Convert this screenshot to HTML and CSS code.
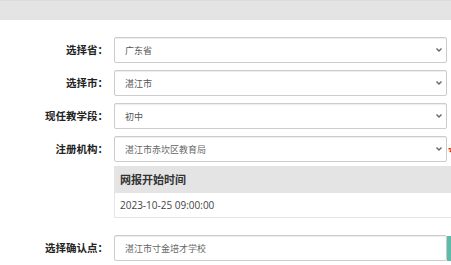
FILE: index.html
```html
<!DOCTYPE html>
<html lang="zh-CN">
<head>
    <meta charset="UTF-8">
    <meta name="viewport" content="width=device-width, initial-scale=1.0">
    <title>报名信息</title>
    <link rel="stylesheet" href="styles.css">
</head>
<body>
    <div class="topbar"></div>

    <div class="form">
        <div class="form-row">
            <label class="form-label">选择省：</label>
            <div class="select">
                <span class="select-text">广东省</span>
                <svg class="chevron" width="6" height="4" viewBox="0 0 6 4"><path d="M0.5 0.5 L3 3 L5.5 0.5" fill="none" stroke="#666" stroke-width="1.4"/></svg>
            </div>
        </div>
        <div class="form-row">
            <label class="form-label">选择市：</label>
            <div class="select">
                <span class="select-text">湛江市</span>
                <svg class="chevron" width="6" height="4" viewBox="0 0 6 4"><path d="M0.5 0.5 L3 3 L5.5 0.5" fill="none" stroke="#666" stroke-width="1.4"/></svg>
            </div>
        </div>
        <div class="form-row">
            <label class="form-label">现任教学段：</label>
            <div class="select">
                <span class="select-text">初中</span>
                <svg class="chevron" width="6" height="4" viewBox="0 0 6 4"><path d="M0.5 0.5 L3 3 L5.5 0.5" fill="none" stroke="#666" stroke-width="1.4"/></svg>
            </div>
        </div>
        <div class="form-row">
            <label class="form-label">注册机构：</label>
            <div class="select">
                <span class="select-text light">湛江市赤坎区教育局</span>
                <svg class="chevron" width="6" height="4" viewBox="0 0 6 4"><path d="M0.5 0.5 L3 3 L5.5 0.5" fill="none" stroke="#666" stroke-width="1.4"/></svg>
            </div>
            <span class="required">*</span>
        </div>

        <div class="info-row">
            <div class="info-table">
                <div class="info-head">网报开始时间</div>
                <div class="info-cell">2023-10-25 09:00:00</div>
            </div>
        </div>

        <div class="form-row point-row">
            <label class="form-label">选择确认点：</label>
            <div class="select input">
                <span class="select-text light">湛江市寸金培才学校</span>
            </div>
            <span class="btn-pick"></span>
        </div>

        <div class="info-row">
            <div class="info-table next"></div>
        </div>
    </div>
</body>
</html>
```

FILE: styles.css
```css
* {
    margin: 0;
    padding: 0;
    box-sizing: border-box;
}
html, body {
    overflow: hidden;
}
body {
    width: 451px;
    height: 265px;
    background: #fff;
    font-family: "Open Sans", "Noto Sans CJK SC", sans-serif;
    color: #333;
}
.topbar {
    height: 20px;
    background-color: #e4e4e4;
    border-top: 1px solid #dcdcdc;
}
.form {
    padding-top: 17px;
}
.form-row {
    display: flex;
    align-items: center;
    margin-bottom: 7px;
}
.form-label {
    width: 108px;
    flex-shrink: 0;
    margin-right: 6px;
    text-align: right;
    font-size: 10.5px;
    font-weight: bold;
    color: #222;
    line-height: 14px;
    white-space: nowrap;
}
.select {
    width: 333px;
    height: 26px;
    flex-shrink: 0;
    display: flex;
    align-items: center;
    justify-content: space-between;
    padding: 0 4px 0 10px;
    border: 1px solid #ccc;
    border-radius: 2px;
    box-shadow: inset 0 1px 1px rgba(0, 0, 0, 0.075);
}
.select-text {
    font-size: 9px;
    color: #555;
}
.select-text.light {
    color: #666;
}
.chevron {
    display: block;
}
.required {
    flex-shrink: 0;
    margin-left: 1px;
    padding-top: 4px;
    color: #e8261c;
    font-size: 15px;
    font-weight: bold;
    line-height: 1;
}
.info-row {
    display: flex;
    padding-left: 114px;
    margin-top: -3px;
}
.info-table {
    width: 360px;
    flex-shrink: 0;
    border-left: 1px solid #e5e5e5;
}
.info-head {
    height: 27px;
    line-height: 27px;
    padding-left: 5px;
    background-color: #e4e4e4;
    font-size: 11px;
    font-weight: bold;
    color: #333;
}
.info-cell {
    height: 25px;
    line-height: 24px;
    padding-left: 5px;
    border-bottom: 1px solid #e5e5e5;
    font-size: 10px;
    color: #444;
}
.point-row {
    margin-top: 17px;
    margin-bottom: 4px;
}
.btn-pick {
    width: 30px;
    height: 25px;
    flex-shrink: 0;
    background-color: #5cbcaa;
}
.info-table.next {
    margin-top: 3px;
    height: 10px;
    border-top: 1px solid #e5e5e5;
}
```
